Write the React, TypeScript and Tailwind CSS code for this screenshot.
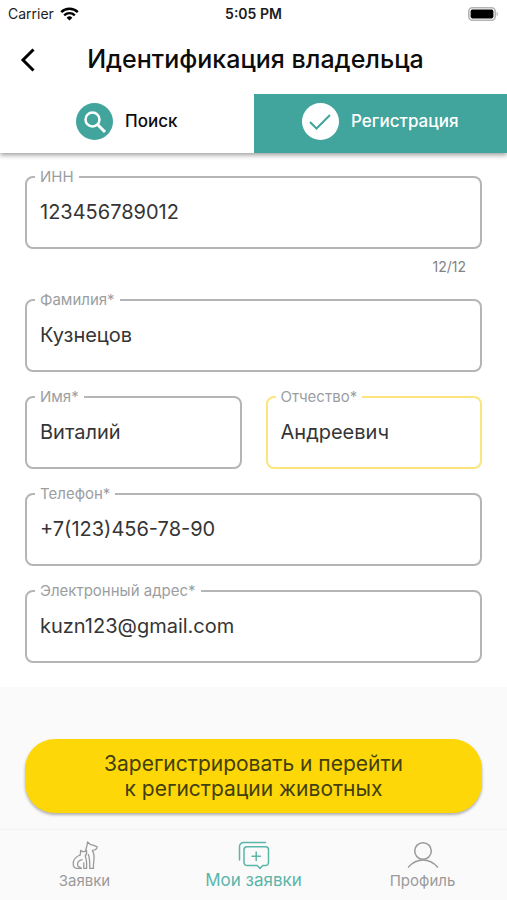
import { useState } from "react";

type FieldProps = {
  id: string;
  label: string;
  value: string;
  onChange: (value: string) => void;
  type?: string;
  maxLength?: number;
  highlighted?: boolean;
};

const Field = ({
  id,
  label,
  value,
  onChange,
  type = "text",
  maxLength,
  highlighted,
}: FieldProps) => {
  return (
    <div className="min-w-0 flex-1">
      <fieldset
        className={`h-20 min-w-0 rounded-lg border-2 px-2 ${
          highlighted ? "border-[#fbe57c]" : "border-[#b3b5b6]"
        }`}
      >
        <legend className="px-[5px] text-[15px] leading-4 text-[#9b9ea1]">
          <label htmlFor={id} className="block">
            {label}
          </label>
        </legend>
        <input
          id={id}
          type={type}
          value={value}
          maxLength={maxLength}
          onChange={(e) => onChange(e.target.value)}
          className="block h-[54px] w-full bg-transparent px-[5px] text-xl text-[#353535] outline-none"
        />
      </fieldset>
      {maxLength && (
        <p className="pt-2.5 pr-4 text-right text-sm leading-4 text-[#828282]">
          {value.length}/{maxLength}
        </p>
      )}
    </div>
  );
};

const StatusBar = () => (
  <div className="grid h-7 grid-cols-3 items-center px-2 text-sm text-[#1c1c1c]">
    <div className="flex items-center gap-1.5">
      <span>Carrier</span>
      <svg width="19" height="14" viewBox="0 0 19 14" fill="none" stroke="#000">
        <path d="M1.2 5.2a12 12 0 0 1 16.6 0" strokeWidth="2.5" />
        <path d="M4.2 8.3a7.6 7.6 0 0 1 10.6 0" strokeWidth="2.4" />
        <path d="M9.5 13.6 6.6 10.7a4.2 4.2 0 0 1 5.8 0z" fill="#000" stroke="none" />
      </svg>
    </div>
    <span className="text-center font-semibold">5:05 PM</span>
    <svg className="justify-self-end" width="31" height="14" viewBox="0 0 31 14">
      <rect x="0.8" y="0.8" width="26.4" height="12.4" rx="3.6" fill="#fff" stroke="#b4b4b4" strokeWidth="1.6" />
      <rect x="2.6" y="2.6" width="22.8" height="8.8" rx="1.8" fill="#000" />
      <path d="M28.6 4.8c1.6.6 1.6 3.8 0 4.4z" fill="#b4b4b4" />
    </svg>
  </div>
);

const DogIcon = () => (
  <svg
    width="28"
    height="30"
    viewBox="0 0 28 30"
    fill="none"
    stroke="currentColor"
    strokeWidth="1.3"
    strokeLinejoin="round"
    strokeLinecap="round"
  >
    {/* dog */}
    <path d="M14.800 10.200C15 7.500 16.600 5.500 16.500 2l3 2.600 2.600.6 4.100 1.600c-.2 2.600-2 3.400-4.800 3.600 1.800 3.400 2 7 1.400 10.600-.4 2.800-.6 4.800-.3 7.400h-3.600" />
    <path d="M17.300 14.500c1.800 4.500 1.400 9 1.500 13.800" />
    {/* cat */}
    <path d="M9 15c.8-1.500.5-3 .6-4.600l2 1.200h1.800l2-1.200c.6 2.400.4 4.200-1.200 5.600 1.600 3.500 1.600 8 1.400 12.400h-2.800v-5.600" />
    <path d="M9 15c-4 1.600-6.800 4.800-6.800 8.600 0 2.800 1.300 4.800 3.600 4.800h4.600c-1-1.600-3.400-.8-3.800-3.200-.4-2.800 1.600-4.800 4.400-5.600" />
  </svg>
);

const RequestsIcon = () => (
  <svg
    width="32"
    height="30"
    viewBox="0 0 32 30"
    fill="none"
    stroke="currentColor"
    strokeWidth="1.5"
    strokeLinejoin="round"
    strokeLinecap="round"
  >
    <path d="M1.500 20V6.500a4 4 0 0 1 4-4h22" />
    <path d="M9 6.800h18.500a3 3 0 0 1 3 3v12.800a3 3 0 0 1-3 3h-2.800L22 28.500l-2.800-2.900H9a3 3 0 0 1-3-3V9.800a3 3 0 0 1 3-3z" />
    <path d="M18.200 12v8.400M14 16.200h8.400" />
  </svg>
);

const ProfileIcon = () => (
  <svg
    width="32"
    height="30"
    viewBox="0 0 32 30"
    fill="none"
    stroke="currentColor"
    strokeWidth="1.5"
    strokeLinecap="round"
  >
    <circle cx="16" cy="11" r="8.300" />
    <path d="M1.500 27C10 17.700 22 17.700 30.500 27" />
  </svg>
);

const navItems = [
  { title: "Заявки", icon: <DogIcon />, active: false },
  { title: "Мои заявки", icon: <RequestsIcon />, active: true },
  { title: "Профиль", icon: <ProfileIcon />, active: false },
];

const App = () => {
  const [inn, setInn] = useState("123456789012");
  const [lastName, setLastName] = useState("Кузнецов");
  const [firstName, setFirstName] = useState("Виталий");
  const [middleName, setMiddleName] = useState("Андреевич");
  const [phone, setPhone] = useState("+7(123)456-78-90");
  const [email, setEmail] = useState("kuzn123@gmail.com");

  return (
    <div className="flex min-h-screen flex-col bg-[#fafafa] font-['Inter','Noto_Sans',sans-serif]">
      <header className="relative bg-white shadow-[0_2px_5px_rgba(0,0,0,0.4)]">
        <StatusBar />
        <div className="flex h-[66px] items-center px-4 pb-0.5">
          <button type="button" aria-label="Назад" className="flex h-10 w-6 items-center justify-center">
            <svg width="16" height="24" viewBox="0 0 16 24" fill="none" stroke="#000" strokeWidth="3">
              <path d="M13.500 1.500 3 12l10.500 10.500" />
            </svg>
          </button>
          <h1 className="flex-1 pr-5 text-center text-[25px] font-medium text-[#0c0c0c]">
            Идентификация владельца
          </h1>
        </div>
        <div className="grid grid-cols-2 text-[17px] font-medium">
          <button type="button" className="flex h-[59px] items-center justify-center gap-3 pb-1 text-[#0c0c0c]">
            <span className="flex size-[37px] items-center justify-center rounded-full bg-[#42a59d] text-white">
              <svg width="24" height="24" viewBox="0 0 24 24" fill="none" stroke="currentColor" strokeWidth="2.500">
                <circle cx="9.500" cy="9.500" r="7" />
                <path d="M14.500 14.500 22 22" strokeWidth="3" />
              </svg>
            </span>
            Поиск
          </button>
          <button type="button" className="flex h-[59px] items-center justify-center gap-3 bg-[#42a59d] pb-1 text-white">
            <span className="flex size-[37px] items-center justify-center rounded-full bg-white text-[#42a59d]">
              <svg width="22" height="18" viewBox="0 0 22 18" fill="none" stroke="currentColor" strokeWidth="2">
                <path d="M1 9l6.500 6.500L21 2" />
              </svg>
            </span>
            Регистрация
          </button>
        </div>
      </header>

      <form className="flex flex-1 flex-col" onSubmit={(e) => e.preventDefault()}>
        <div className="flex flex-col gap-[17px] bg-white px-[25px] pt-4 pb-6">
          <Field id="inn" label="ИНН" value={inn} onChange={setInn} maxLength={12} />
          <Field id="lastName" label="Фамилия*" value={lastName} onChange={setLastName} />
          <div className="flex gap-6">
            <Field id="firstName" label="Имя*" value={firstName} onChange={setFirstName} />
            <Field id="middleName" label="Отчество*" value={middleName} onChange={setMiddleName} highlighted />
          </div>
          <Field id="phone" label="Телефон*" type="tel" value={phone} onChange={setPhone} />
          <Field id="email" label="Электронный адрес*" type="email" value={email} onChange={setEmail} />
        </div>

        <div className="mt-auto px-[25px] pt-8 pb-4">
          <button
            type="submit"
            className="w-full rounded-[30px] bg-[#fdd708] py-3 text-[21px] leading-[25px] text-[#43400f] shadow-[0_2px_3px_rgba(0,0,0,0.3)]"
          >
            Зарегистрировать и перейти
            <br />к регистрации животных
          </button>
        </div>
      </form>

      <nav className="grid grid-cols-3 border-t border-[#f3f3f3] pt-2.5 pb-2">
        {navItems.map((item) => (
          <a
            key={item.title}
            href="#"
            className={`flex flex-col items-center ${
              item.active ? "text-[17px] leading-5 text-[#5bb5a9]" : "text-[15px] leading-[22px] text-[#9a9a9a]"
            }`}
          >
            {item.icon}
            {item.title}
          </a>
        ))}
      </nav>
    </div>
  );
};

export default App;
